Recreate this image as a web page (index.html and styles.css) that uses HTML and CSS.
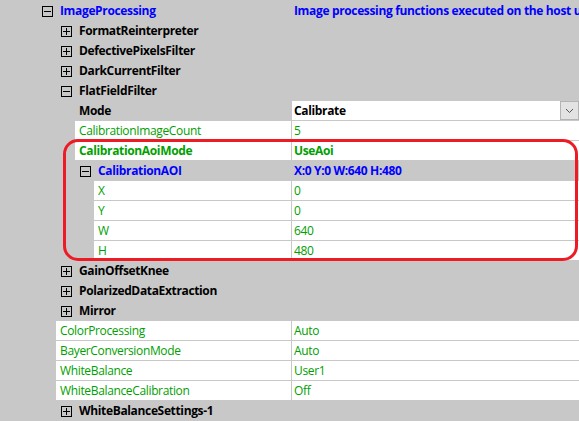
FILE: index.html
```html
<!DOCTYPE html>
<html>
<head>
<meta charset="utf-8">
<link rel="stylesheet" href="styles.css">
</head>
<body>
<div class="grid">
  <div class="row cat i0 blue">
    <div class="name"><svg class="box" width="11" height="11" viewBox="0 0 11 11"><rect x="0.5" y="0.5" width="10" height="10"/><line x1="2" y1="5.5" x2="9" y2="5.5"/></svg><span class="label">ImageProcessing</span></div>
    <div class="value">Image processing functions executed on the host using the CPU</div>
  </div>
  <div class="row cat i1">
    <div class="name"><svg class="box" width="11" height="11" viewBox="0 0 11 11"><rect x="0.5" y="0.5" width="10" height="10"/><line x1="2" y1="5.5" x2="9" y2="5.5"/><line x1="5.5" y1="2" x2="5.5" y2="9"/></svg><span class="label">FormatReinterpreter</span></div>
    <div class="value"></div>
  </div>
  <div class="row cat i1">
    <div class="name"><svg class="box" width="11" height="11" viewBox="0 0 11 11"><rect x="0.5" y="0.5" width="10" height="10"/><line x1="2" y1="5.5" x2="9" y2="5.5"/><line x1="5.5" y1="2" x2="5.5" y2="9"/></svg><span class="label">DefectivePixelsFilter</span></div>
    <div class="value"></div>
  </div>
  <div class="row cat i1">
    <div class="name"><svg class="box" width="11" height="11" viewBox="0 0 11 11"><rect x="0.5" y="0.5" width="10" height="10"/><line x1="2" y1="5.5" x2="9" y2="5.5"/><line x1="5.5" y1="2" x2="5.5" y2="9"/></svg><span class="label">DarkCurrentFilter</span></div>
    <div class="value"></div>
  </div>
  <div class="row cat i1">
    <div class="name"><svg class="box" width="11" height="11" viewBox="0 0 11 11"><rect x="0.5" y="0.5" width="10" height="10"/><line x1="2" y1="5.5" x2="9" y2="5.5"/></svg><span class="label">FlatFieldFilter</span></div>
    <div class="value"></div>
  </div>
  <div class="row prop i1 sel">
    <div class="name"><span class="label">Mode</span></div>
    <div class="value"><span class="vtext">Calibrate</span><span class="dd"><svg width="9" height="6" viewBox="0 0 9 6"><polyline points="1,1 4.5,4.5 8,1"/></svg></span></div>
  </div>
  <div class="row prop i1 green">
    <div class="name"><span class="label">CalibrationImageCount</span></div>
    <div class="value">5</div>
  </div>
  <div class="row prop i1 green bold">
    <div class="name"><span class="label">CalibrationAoiMode</span></div>
    <div class="value">UseAoi</div>
  </div>
  <div class="row cat i2 blue">
    <div class="name"><svg class="box" width="11" height="11" viewBox="0 0 11 11"><rect x="0.5" y="0.5" width="10" height="10"/><line x1="2" y1="5.5" x2="9" y2="5.5"/></svg><span class="label">CalibrationAOI</span></div>
    <div class="value">X:0 Y:0 W:640 H:480</div>
  </div>
  <div class="row prop i2 green">
    <div class="name"><span class="label">X</span></div>
    <div class="value">0</div>
  </div>
  <div class="row prop i2 green">
    <div class="name"><span class="label">Y</span></div>
    <div class="value">0</div>
  </div>
  <div class="row prop i2 green">
    <div class="name"><span class="label">W</span></div>
    <div class="value">640</div>
  </div>
  <div class="row prop i2 green">
    <div class="name"><span class="label">H</span></div>
    <div class="value">480</div>
  </div>
  <div class="row cat i1">
    <div class="name"><svg class="box" width="11" height="11" viewBox="0 0 11 11"><rect x="0.5" y="0.5" width="10" height="10"/><line x1="2" y1="5.5" x2="9" y2="5.5"/><line x1="5.5" y1="2" x2="5.5" y2="9"/></svg><span class="label">GainOffsetKnee</span></div>
    <div class="value"></div>
  </div>
  <div class="row cat i1">
    <div class="name"><svg class="box" width="11" height="11" viewBox="0 0 11 11"><rect x="0.5" y="0.5" width="10" height="10"/><line x1="2" y1="5.5" x2="9" y2="5.5"/><line x1="5.5" y1="2" x2="5.5" y2="9"/></svg><span class="label">PolarizedDataExtraction</span></div>
    <div class="value"></div>
  </div>
  <div class="row cat i1">
    <div class="name"><svg class="box" width="11" height="11" viewBox="0 0 11 11"><rect x="0.5" y="0.5" width="10" height="10"/><line x1="2" y1="5.5" x2="9" y2="5.5"/><line x1="5.5" y1="2" x2="5.5" y2="9"/></svg><span class="label">Mirror</span></div>
    <div class="value"></div>
  </div>
  <div class="row prop i0 green">
    <div class="name"><span class="label">ColorProcessing</span></div>
    <div class="value">Auto</div>
  </div>
  <div class="row prop i0 green">
    <div class="name"><span class="label">BayerConversionMode</span></div>
    <div class="value">Auto</div>
  </div>
  <div class="row prop i0 green">
    <div class="name"><span class="label">WhiteBalance</span></div>
    <div class="value">User1</div>
  </div>
  <div class="row prop i0 green">
    <div class="name"><span class="label">WhiteBalanceCalibration</span></div>
    <div class="value">Off</div>
  </div>
  <div class="row cat i1">
    <div class="name"><svg class="box" width="11" height="11" viewBox="0 0 11 11"><rect x="0.5" y="0.5" width="10" height="10"/><line x1="2" y1="5.5" x2="9" y2="5.5"/><line x1="5.5" y1="2" x2="5.5" y2="9"/></svg><span class="label">WhiteBalanceSettings-1</span></div>
    <div class="value"></div>
  </div>
  <div class="highlight"></div>
</div>
</body>
</html>
```

FILE: styles.css
```css
html, body {
  margin: 0;
  padding: 0;
  background: #c8c8c8;
}
body {
  width: 579px;
  height: 421px;
  overflow: hidden;
  font-family: "Open Sans", "Noto Sans", sans-serif;
  font-size: 12px;
  letter-spacing: -0.35px;
  color: #000;
}
.grid {
  position: relative;
  width: 579px;
}
.row {
  display: flex;
  height: 20px;
  box-sizing: border-box;
  padding-top: 1px;
  line-height: 19px;
  white-space: nowrap;
}
.name {
  flex: none;
  width: 291px;
  box-sizing: border-box;
  display: flex;
  align-items: center;
  overflow: hidden;
}
.value {
  flex: 1;
  margin-left: 1px;
  padding-left: 2px;
  overflow: hidden;
  display: flex;
  align-items: center;
}
.cat .label, .cat .value { font-weight: 700; }
.cat.i0 .name { padding-left: 42px; }
.cat.i1 .name { padding-left: 61px; }
.cat.i2 .name { padding-left: 80px; }
.prop.i0 .name { padding-left: 56px; }
.prop.i1 .name { padding-left: 75px; }
.prop.i2 .name { padding-left: 94px; }
.prop .label {
  flex: 1;
  align-self: stretch;
  background: #fff;
  padding-left: 4px;
}
.prop .value { background: #fff; align-self: stretch; }
.prop.sel .label {
  background: transparent;
  font-weight: 700;
}
.prop.sel .value { font-weight: 700; padding-right: 0; }
.vtext { flex: 1; }
.box {
  flex: none;
  margin-right: 7px;
  margin-top: 1px;
  fill: none;
  stroke: #000;
  stroke-width: 1;
  shape-rendering: crispEdges;
}
.blue { color: #0000ff; }
.green { color: #00a000; }
.bold .label, .bold .value { font-weight: 700; }
.dd {
  flex: none;
  width: 19px;
  height: 19px;
  box-sizing: border-box;
  border: 1px solid #b4b4b4;
  background: #e3e3e3;
  display: flex;
  align-items: center;
  justify-content: center;
}
.dd svg {
  fill: none;
  stroke: #555;
  stroke-width: 1;
}
.highlight {
  position: absolute;
  left: 63px;
  top: 139px;
  width: 515px;
  height: 122px;
  box-sizing: border-box;
  border: 3px solid #ed1c24;
  border-radius: 15px;
  pointer-events: none;
}
```
